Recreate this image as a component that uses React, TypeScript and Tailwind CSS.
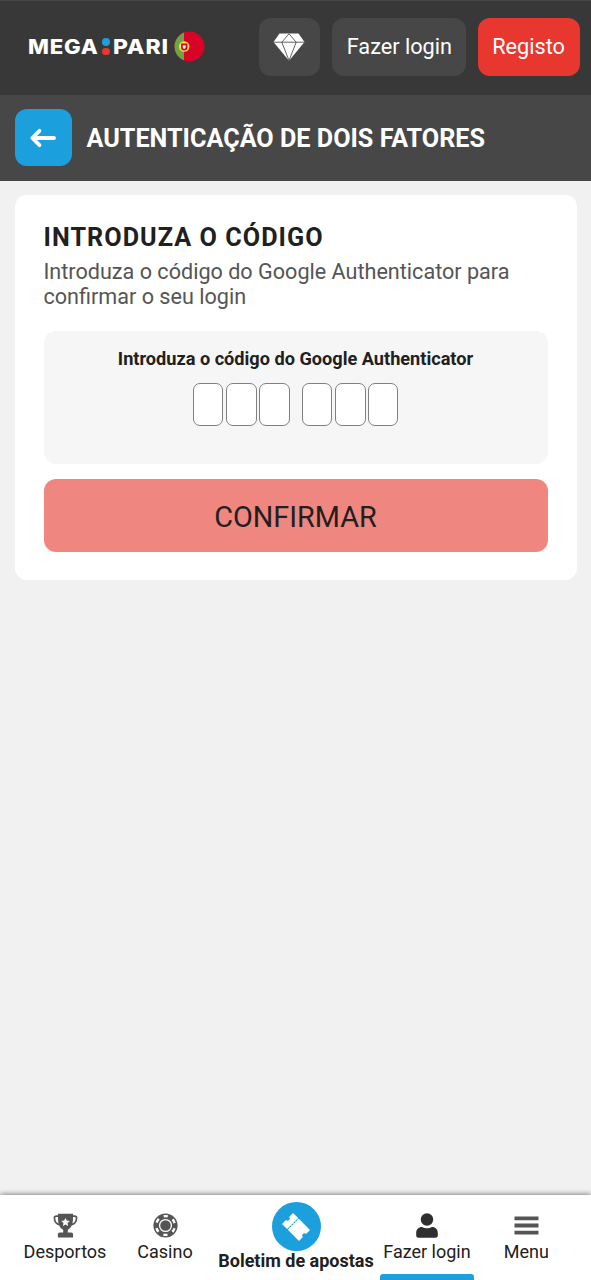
import React from "react";

function Flag() {
  return (
    <svg className="h-[31px] w-[31px]" viewBox="0 0 31 31">
      <clipPath id="flag-round">
        <circle cx="15.5" cy="15.5" r="15" />
      </clipPath>
      <g clipPath="url(#flag-round)">
        <rect width="31" height="31" fill="#d80327" />
        <rect width="10" height="31" fill="#6da544" />
      </g>
      <circle cx="10.2" cy="15.5" r="5.3" fill="#ffda44" />
      <path d="M7 12.6h6.4v3.6a3.2 3.2 0 0 1-6.4 0z" fill="#d80327" />
      <path d="M8.7 14.3h3v2a1.5 1.5 0 0 1-3 0z" fill="#f6f0f0" />
    </svg>
  );
}

function Diamond() {
  return (
    <svg className="h-[28px] w-[32px]" viewBox="0 0 32 28">
      <path d="M6.5 .5h19L31.5 9 16 27.8.5 9z" fill="#fff" />
      <path
        d="M.5 9.2h31M8.8 9.2 16 .8l7.2 8.4M8.8 9.2 16 27.5l7.2-18.3"
        fill="none"
        stroke="#474747"
        strokeWidth="0.85"
      />
    </svg>
  );
}

function BackArrow() {
  return (
    <svg className="h-[20px] w-[28px]" viewBox="0 0 28 20">
      <path
        d="M25 10H4M10.5 2.8 3.3 10l7.2 7.2"
        fill="none"
        stroke="#fff"
        strokeWidth="3.8"
        strokeLinecap="round"
        strokeLinejoin="round"
      />
    </svg>
  );
}

function Trophy() {
  return (
    <svg className="h-[25px] w-[25px]" viewBox="0 0 25 25">
      <path
        d="M5.5 3.2H3.3Q1.4 3.2 1.4 5c0 3.6 2.3 6.4 6 6.7M19.5 3.2h2.2q1.9 0 1.9 1.8c0 3.6-2.3 6.4-6 6.7"
        fill="none"
        stroke="#555"
        strokeWidth="1.7"
      />
      <path
        d="M5 .7h15v4.6c0 6-1.7 9.8-5.2 11.5v2.7h3.3c1.2 0 2 .8 2 2v3H4.9v-3c0-1.2.8-2 2-2h3.3v-2.7C6.7 15.1 5 11.3 5 5.3z"
        fill="#555"
      />
      <path
        d="m12.5 4.9 1.25 2.7 2.95.35-2.18 2.02.58 2.92-2.6-1.45-2.6 1.45.58-2.92L8.3 7.95l2.95-.35z"
        fill="#fff"
      />
    </svg>
  );
}

function Chip() {
  return (
    <svg className="h-[25px] w-[25px]" viewBox="0 0 25 25">
      <circle cx="12.5" cy="12.5" r="12.1" fill="#555" />
      <circle
        cx="12.5"
        cy="12.5"
        r="9.4"
        fill="none"
        stroke="#fff"
        strokeWidth="2.4"
        strokeDasharray="4.2 5.644"
        strokeDashoffset="-2.822"
      />
      <circle cx="12.5" cy="12.5" r="5.9" fill="none" stroke="#fff" strokeWidth="1.3" />
    </svg>
  );
}

function Ticket() {
  return (
    <svg className="h-[28px] w-[28px]" viewBox="0 0 28 28">
      <g transform="translate(14 14) rotate(45)" fill="#fff">
        <path d="M-12-7.8h7.2V7.8H-12V2.2a2.2 2.2 0 0 0 0-4.4z" />
        <path d="M-3.8-7.8H12v5.6a2.2 2.2 0 0 0 0 4.4v5.6H-3.8z" />
        <path d="M-4.3-7V7" stroke="#fff" strokeWidth="1.4" strokeDasharray=".6 2.4" />
      </g>
    </svg>
  );
}

function Person() {
  return (
    <svg className="h-[25px] w-[22px]" viewBox="0 0 22 25">
      <circle cx="11" cy="6.5" r="6.2" fill="#2f2f2f" />
      <path
        d="M6 14.1c1.4.8 3.1 1.2 5 1.2s3.6-.4 5-1.2c3.5 0 5.8 2.4 5.8 5.9v2.5c0 1.4-.9 2.2-2.2 2.2H2.4C1.1 24.7.2 23.9.2 22.5V20c0-3.5 2.3-5.9 5.8-5.9z"
        fill="#2f2f2f"
      />
    </svg>
  );
}

function Bars() {
  return (
    <svg className="h-[25px] w-[25px]" viewBox="0 0 25 25">
      <path d="M.5 3.5h24v3.8H.5zM.5 10.6h24v3.8H.5zM.5 17.7h24v3.8H.5z" fill="#555" />
    </svg>
  );
}

function CodeCell({ space = "" }: { space?: string }) {
  return (
    <input
      aria-label="Dígito"
      maxLength={1}
      className={`h-[43px] w-[30.5px] rounded-[7px] border border-[#808080] bg-white text-center text-xl outline-none ${space}`}
    />
  );
}

function NavItem({ icon, label, width }: { icon: React.ReactNode; label: string; width: string }) {
  return (
    <a className={`flex shrink-0 flex-col items-center pt-[18px] ${width}`}>
      {icon}
      <span className="whitespace-nowrap text-[18px] leading-[28px]">{label}</span>
    </a>
  );
}

export default function App() {
  return (
    <div className="flex h-[1280px] w-[591px] flex-col overflow-hidden bg-[#f1f1f1] font-['Roboto',sans-serif] text-[#202020]">
      <header className="flex h-[95px] shrink-0 items-start border-t border-[#464646] bg-[#383838] pl-[28px] pr-[11.5px] pt-[17px] text-white">
        <div className="flex h-[57px] w-[231.5px] items-center font-['Inter',sans-serif] text-[20.5px] font-extrabold leading-none">
          <span className="w-[74px] origin-left scale-x-[1.08] pt-px tracking-[0.8px]">MEGA</span>
          <span className="flex w-[11px] flex-col gap-[2px]">
            <i className="h-[7.5px] w-[7.5px] rounded-full bg-[#1b9fdd]" />
            <i className="h-[7.5px] w-[7.5px] rounded-full bg-[#e8372e]" />
          </span>
          <span className="w-[61px] origin-left scale-x-[1.12] pt-px tracking-[0.8px]">PARI</span>
          <Flag />
        </div>
        <button className="flex h-[58px] w-[61px] items-center justify-center rounded-xl bg-[#474747] pr-[2px]">
          <Diamond />
        </button>
        <button className="ml-[12px] h-[58px] w-[133.5px] whitespace-nowrap rounded-xl bg-[#474747] pl-px text-[21.7px]">
          Fazer login
        </button>
        <button className="ml-[12px] h-[58px] w-[102px] rounded-xl bg-[#e8372e] text-[21.7px]">
          Registo
        </button>
      </header>

      <div className="flex h-[86px] shrink-0 items-center bg-[#474747] pb-px pl-[14.5px] text-white">
        <button className="flex h-[57px] w-[57px] items-center justify-center rounded-xl bg-[#1b9fdd]">
          <BackArrow />
        </button>
        <h1 className="ml-[15px] whitespace-nowrap pt-[2px] text-[25.2px] font-bold">AUTENTICAÇÃO DE DOIS FATORES</h1>
      </div>

      <main className="flex-1 px-[14.5px] pt-[14px]">
        <section className="h-[385px] rounded-xl bg-white px-[29px] pt-[28px]">
          <h2 className="whitespace-nowrap text-[25.2px] font-bold leading-[30px] tracking-[1.05px]">INTRODUZA O CÓDIGO</h2>
          <p className="mt-[6px] whitespace-nowrap text-[21.6px] leading-[25px] text-[#555]">
            Introduza o código do Google Authenticator para
            <br />
            confirmar o seu login
          </p>
          <div className="mt-[22px] flex h-[133px] flex-col items-center rounded-xl bg-[#f6f6f6] pt-[16px]">
            <label className="whitespace-nowrap text-[18.15px] font-bold leading-[24px]">
              Introduza o código do Google Authenticator
            </label>
            <div className="mt-[12px] flex">
              <CodeCell />
              <CodeCell space="ml-[3.3px]" />
              <CodeCell space="ml-[2.2px]" />
              <CodeCell space="ml-[12px]" />
              <CodeCell space="ml-[3.3px]" />
              <CodeCell space="ml-[2.2px]" />
            </div>
          </div>
          <button className="mt-[15px] h-[73px] w-full rounded-xl bg-[#ef8780] pt-[4px] text-[28.8px]">CONFIRMAR</button>
        </section>
      </main>

      <nav className="flex h-[85px] shrink-0 bg-white pl-[15px] shadow-[0_-1px_5px_rgba(0,0,0,0.45)]">
        <NavItem icon={<Trophy />} label="Desportos" width="w-[100px]" />
        <NavItem icon={<Chip />} label="Casino" width="w-[100px]" />
        <a className="flex w-[162px] shrink-0 flex-col items-center pt-[7px]">
          <span className="flex h-[49px] w-[49px] items-center justify-center rounded-full bg-[#1b9fdd]">
            <Ticket />
          </span>
          <span className="whitespace-nowrap text-[18px] font-bold leading-[20px]">Boletim de apostas</span>
        </a>
        <div className="flex w-[100px] shrink-0 flex-col items-center">
          <NavItem icon={<Person />} label="Fazer login" width="w-[100px]" />
          <span className="mt-[8px] h-[6px] w-[94px] rounded-t-[3px] bg-[#1b9fdd]" />
        </div>
        <NavItem icon={<Bars />} label="Menu" width="w-[98.5px]" />
      </nav>
    </div>
  );
}
